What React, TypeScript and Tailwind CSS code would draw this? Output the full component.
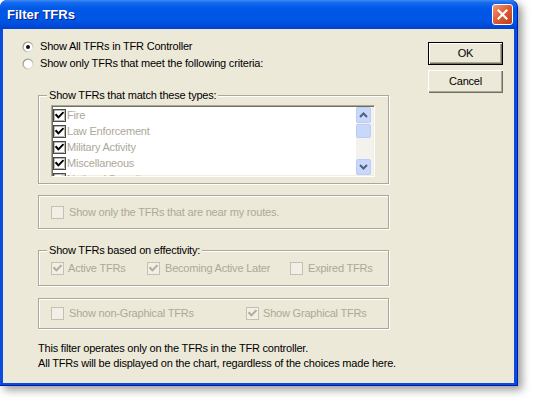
import React from 'react';

const font = { fontFamily: '"Liberation Sans", Arial, sans-serif' };

function Radio({ checked }: { checked?: boolean }) {
  return (
    <svg width="12" height="12" viewBox="0 0 12 12" className="shrink-0">
      <defs>
        <linearGradient id={checked ? 'rg1' : 'rg2'} x1="0" y1="0" x2="1" y2="1">
          <stop offset="0" stopColor="#8a877a" />
          <stop offset="0.5" stopColor="#b8b5a6" />
          <stop offset="1" stopColor="#ffffff" />
        </linearGradient>
      </defs>
      <circle cx="6" cy="6" r="5.5" fill={`url(#${checked ? 'rg1' : 'rg2'})`} />
      <circle cx="6" cy="6" r="4.3" fill="#ffffff" />
      {checked && <circle cx="6" cy="6" r="2" fill="#111" />}
    </svg>
  );
}

function ListCheck() {
  return (
    <svg width="13" height="13" viewBox="0 0 13 13" className="shrink-0">
      <rect x="0.5" y="0.5" width="12" height="12" fill="#fff" stroke="#4a4a44" />
      <rect x="1.5" y="1.5" width="10" height="10" fill="none" stroke="#8e8c80" strokeWidth="0.6" />
      <polyline points="3.2,6 5.4,8.4 9.8,3.8" fill="none" stroke="#000" strokeWidth="2" strokeLinecap="square" />
    </svg>
  );
}

function DisabledCheck({ checked }: { checked?: boolean }) {
  return (
    <svg width="13" height="13" viewBox="0 0 13 13" className="shrink-0">
      <rect x="0.5" y="0.5" width="12" height="12" fill="#f1efe6" stroke="#c4c1b2" />
      {checked && (
        <polyline points="3.2,6 5.4,8.4 9.8,3.8" fill="none" stroke="#b0ad9f" strokeWidth="2" strokeLinecap="square" />
      )}
    </svg>
  );
}

function Group({ label, className, children }: { label?: string; className: string; children?: React.ReactNode }) {
  return (
    <div
      className={`relative w-[351px] border border-[#ACA899] shadow-[inset_1px_1px_0_#fff,1px_1px_0_#fff] ${className}`}
    >
      {label && (
        <span className="absolute left-[8px] -top-[8px] bg-[#ECE9D8] px-[2px] whitespace-nowrap text-black">
          {label}
        </span>
      )}
      {children}
    </div>
  );
}

function ScrollBtn({ up }: { up?: boolean }) {
  return (
    <div className="w-[15px] h-[16px] rounded-[2px] border border-[#BBCDF4] bg-[#C9D8FA] flex items-center justify-center">
      <svg width="9" height="6" viewBox="0 0 9 6">
        <polyline
          points={up ? '1,5 4.5,1.5 8,5' : '1,1 4.5,4.5 8,1'}
          fill="none"
          stroke="#4D6185"
          strokeWidth="2"
        />
      </svg>
    </div>
  );
}

export default function App() {
  const types = ['Fire', 'Law Enforcement', 'Military Activity', 'Miscellaneous', 'National Security'];

  return (
    <div className="w-[534px] h-[401px] bg-white overflow-hidden" style={font}>
      <div className="w-[518px] h-[386px] flex flex-col rounded-t-[7px] bg-[#0A4CDE] border-r border-b border-[#0019A8] shadow-[4px_4px_9px_rgba(0,0,0,0.4)]">
        {/* title bar */}
        <div className="h-[29px] shrink-0 rounded-t-[7px] bg-[linear-gradient(to_bottom,#3C8CF3_0%,#1468EE_10%,#0058E6_30%,#0055E5_70%,#004AD9_90%,#0041C8_100%)] flex items-center pl-[7px] pr-[4px]">
          <span className="text-white font-bold text-[13px] [text-shadow:1px_1px_0_#0A1E8C]">Filter TFRs</span>
          <div className="ml-auto w-[21px] h-[21px] rounded-[3px] border border-white bg-[linear-gradient(135deg,#F29A78,#DE5A30_50%,#BE3C1C)] flex items-center justify-center">
            <svg width="11" height="11" viewBox="0 0 11 11">
              <path d="M1.5 1.5 L9.5 9.5 M9.5 1.5 L1.5 9.5" stroke="#fff" strokeWidth="2.2" strokeLinecap="square" />
            </svg>
          </div>
        </div>

        {/* client area */}
        <div className="flex-1 mx-[3px] mb-[2px] bg-[#ECE9D8] flex text-[11px] leading-[15px] tracking-[-0.2px] text-black">
          <div className="w-[400px] flex flex-col">
            <div className="ml-[19px] mt-[9px] h-[17px] flex items-center gap-[6px]">
              <Radio checked />
              <span>Show All TFRs in TFR Controller</span>
            </div>
            <div className="ml-[19px] h-[17px] flex items-center gap-[6px]">
              <Radio />
              <span>Show only TFRs that meet the following criteria:</span>
            </div>

            <Group label="Show TFRs that match these types:" className="ml-[35px] mt-[23px] h-[89px]">
              <div className="ml-[12px] mt-[9px] w-[324px] h-[72px] flex bg-white border border-[#ACA899] border-r-white border-b-white shadow-[inset_1px_1px_0_#716F64,inset_-1px_-1px_0_#F1EFE2] overflow-hidden">
                <div className="flex-1 pl-[1px] pt-[1px] flex flex-col">
                  {types.map((t) => (
                    <div key={t} className="h-[16px] shrink-0 flex items-center gap-[1px] text-[#ACA899] whitespace-nowrap">
                      <ListCheck />
                      <span>{t}</span>
                    </div>
                  ))}
                </div>
                <div className="w-[17px] mr-[1px] my-[1px] bg-[#F3F2EC] flex flex-col">
                  <ScrollBtn up />
                  <div className="mt-[1px] w-[15px] h-[14px] rounded-[2px] border border-[#BBCDF4] bg-[#C9D8FA]" />
                  <div className="flex-1" />
                  <ScrollBtn />
                </div>
              </div>
            </Group>

            <Group className="ml-[35px] mt-[11px] h-[34px]">
              <div className="h-full pl-[12px] flex items-center gap-[5px] text-[#ACA899]">
                <DisabledCheck />
                <span>Show only the TFRs that are near my routes.</span>
              </div>
            </Group>

            <Group label="Show TFRs based on effectivity:" className="ml-[35px] mt-[21px] h-[36px]">
              <div className="h-full pl-[12px] pt-[1px] flex items-center text-[#ACA899]">
                <div className="w-[96px] flex items-center gap-[4px]">
                  <DisabledCheck checked />
                  <span>Active TFRs</span>
                </div>
                <div className="w-[143px] flex items-center gap-[5px]">
                  <DisabledCheck checked />
                  <span>Becoming Active Later</span>
                </div>
                <div className="flex items-center gap-[5px]">
                  <DisabledCheck />
                  <span>Expired TFRs</span>
                </div>
              </div>
            </Group>

            <Group className="ml-[35px] mt-[12px] h-[31px]">
              <div className="h-full pl-[12px] flex items-center text-[#ACA899]">
                <div className="w-[195px] flex items-center gap-[5px]">
                  <DisabledCheck />
                  <span>Show non-Graphical TFRs</span>
                </div>
                <div className="flex items-center gap-[4px]">
                  <DisabledCheck checked />
                  <span>Show Graphical TFRs</span>
                </div>
              </div>
            </Group>

            <div className="ml-[35px] mt-[12px] whitespace-nowrap">
              <p>This filter operates only on the TFRs in the TFR controller.</p>
              <p>All TFRs will be displayed on the chart, regardless of the choices made here.</p>
            </div>
          </div>

          <div className="ml-[25px] mt-[13px] flex flex-col gap-[5px]">
            <button className="w-[75px] h-[23px] bg-[#ECE9D8] border border-black shadow-[inset_1px_1px_0_#fff,inset_-1px_-1px_0_#716F64,inset_-2px_-2px_0_#ACA899] text-[11px]">
              OK
            </button>
            <button className="w-[75px] h-[23px] bg-[#ECE9D8] shadow-[inset_1px_1px_0_#fff,inset_-1px_-1px_0_#716F64,inset_-2px_-2px_0_#ACA899] text-[11px]">
              Cancel
            </button>
          </div>
        </div>
      </div>
    </div>
  );
}
